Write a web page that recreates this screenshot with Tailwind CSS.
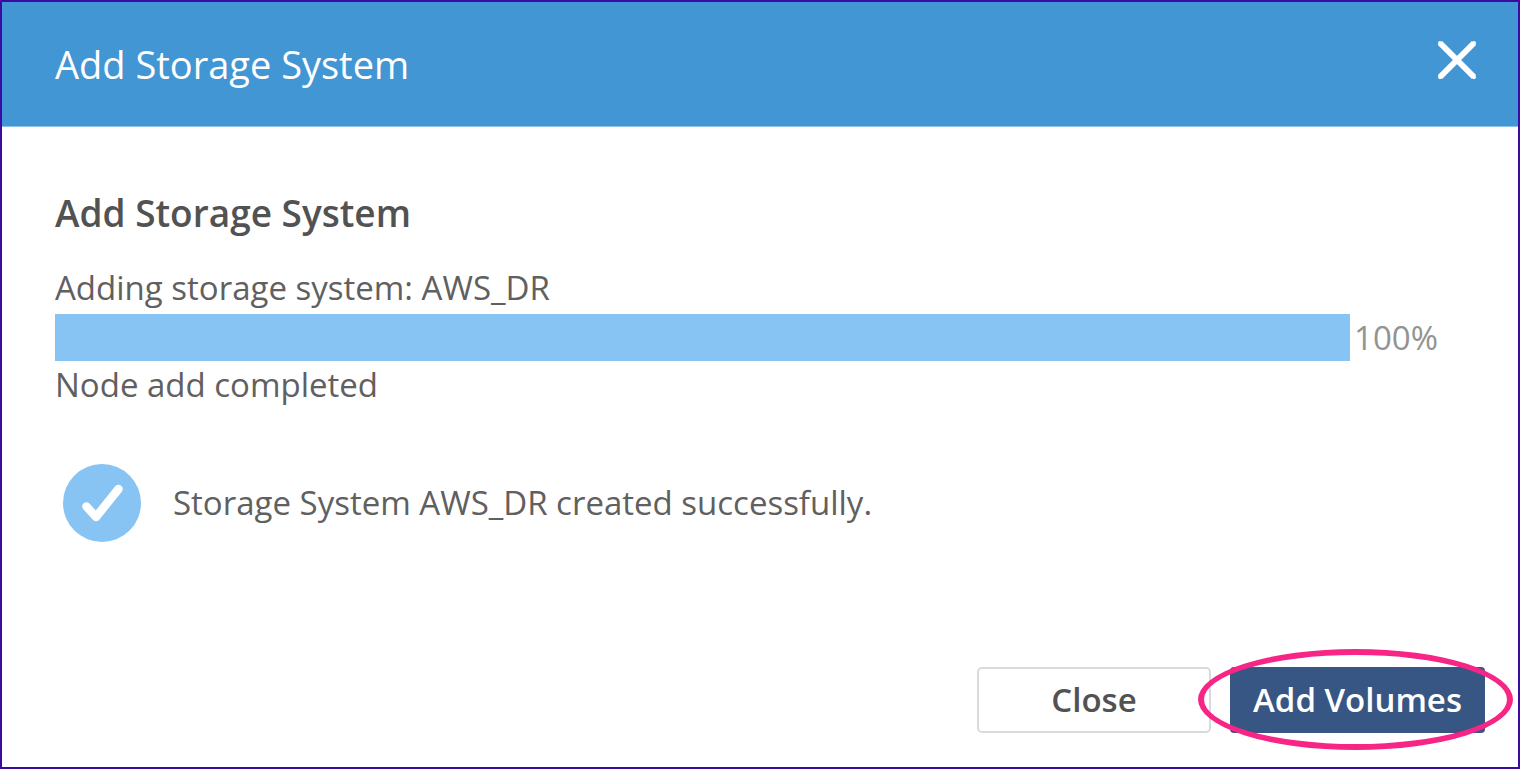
<!DOCTYPE html>
<html lang="en">
<head>
    <meta charset="UTF-8">
    <meta name="viewport" content="width=device-width, initial-scale=1.0">
    <title>Add Storage System</title>
    <script src="https://cdn.jsdelivr.net/npm/@tailwindcss/browser@4"></script>
</head>
<body class="bg-white font-['Open_Sans',sans-serif] text-[#606060]">
    <div role="dialog" aria-labelledby="dialogTitle" class="min-h-screen flex flex-col border-2 border-[#3a0ca3]">
        <!-- Header -->
        <header class="flex items-center justify-between h-[125px] pl-[53px] pr-[41px] bg-[#4296d3] border-b border-[#8dc0e5] text-white">
            <h1 id="dialogTitle" class="text-[38px] leading-[50px] font-medium">Add Storage System</h1>
            <button type="button" aria-label="Close dialog" class="mb-2 cursor-pointer">
                <svg class="size-10" viewBox="0 0 40 40" fill="none" stroke="currentColor" stroke-width="6">
                    <path d="M3 3 L37 37 M37 3 L3 37" />
                    <path d="M3 3 L37 37 M37 3 L3 37" stroke-width="4" stroke-linecap="round" />
                </svg>
            </button>
        </header>

        <!-- Progress -->
        <main class="pl-[53px] pr-20 pt-[61px]">
            <h2 class="text-[37px] leading-[50px] font-semibold text-[#525252]">Add Storage System</h2>
            <p id="progressLabel" class="mt-6 text-[33px] leading-[52px]">Adding storage system: AWS_DR</p>
            <div class="flex items-center gap-1">
                <div role="progressbar" aria-labelledby="progressLabel" aria-valuenow="100" aria-valuemin="0" aria-valuemax="100" class="flex-1 h-[47px]">
                    <div class="h-full bg-[#87c3f3]" style="width: 100%"></div>
                </div>
                <span class="text-[33px] leading-[46px] text-[#939393]">100%</span>
            </div>
            <p class="text-[33px] leading-[48px]">Node add completed</p>

            <div class="mt-[55px] pl-2 flex items-center gap-8">
                <svg class="size-[78px] shrink-0" viewBox="0 0 78 78" fill="none">
                    <circle cx="39" cy="39" r="39" fill="#87c3f3" />
                    <path d="M23.5 42.5 L33 53 L55.5 25" stroke="#fff" stroke-width="8.5" stroke-linecap="round" stroke-linejoin="round" />
                </svg>
                <p class="text-[33px] leading-[48px]">Storage System AWS_DR created successfully.</p>
            </div>
        </main>

        <!-- Actions -->
        <footer class="mt-auto flex justify-end gap-[19px] pr-[33px] pb-[34px]">
            <button type="button" class="w-[234px] h-[66px] rounded-[5px] border-2 border-[#dadada] bg-white text-[33px] leading-[48px] font-semibold text-[#525252] cursor-pointer">Close</button>
            <div class="relative">
                <button type="button" class="w-[255px] h-[66px] rounded-[4px] bg-[#375683] text-[33px] leading-[48px] font-semibold text-white cursor-pointer">Add Volumes</button>
                <span class="absolute -left-8 -right-7 -top-[18px] -bottom-[17px] rounded-[50%] border-6 border-[#f72585] pointer-events-none"></span>
            </div>
        </footer>
    </div>
</body>
</html>
